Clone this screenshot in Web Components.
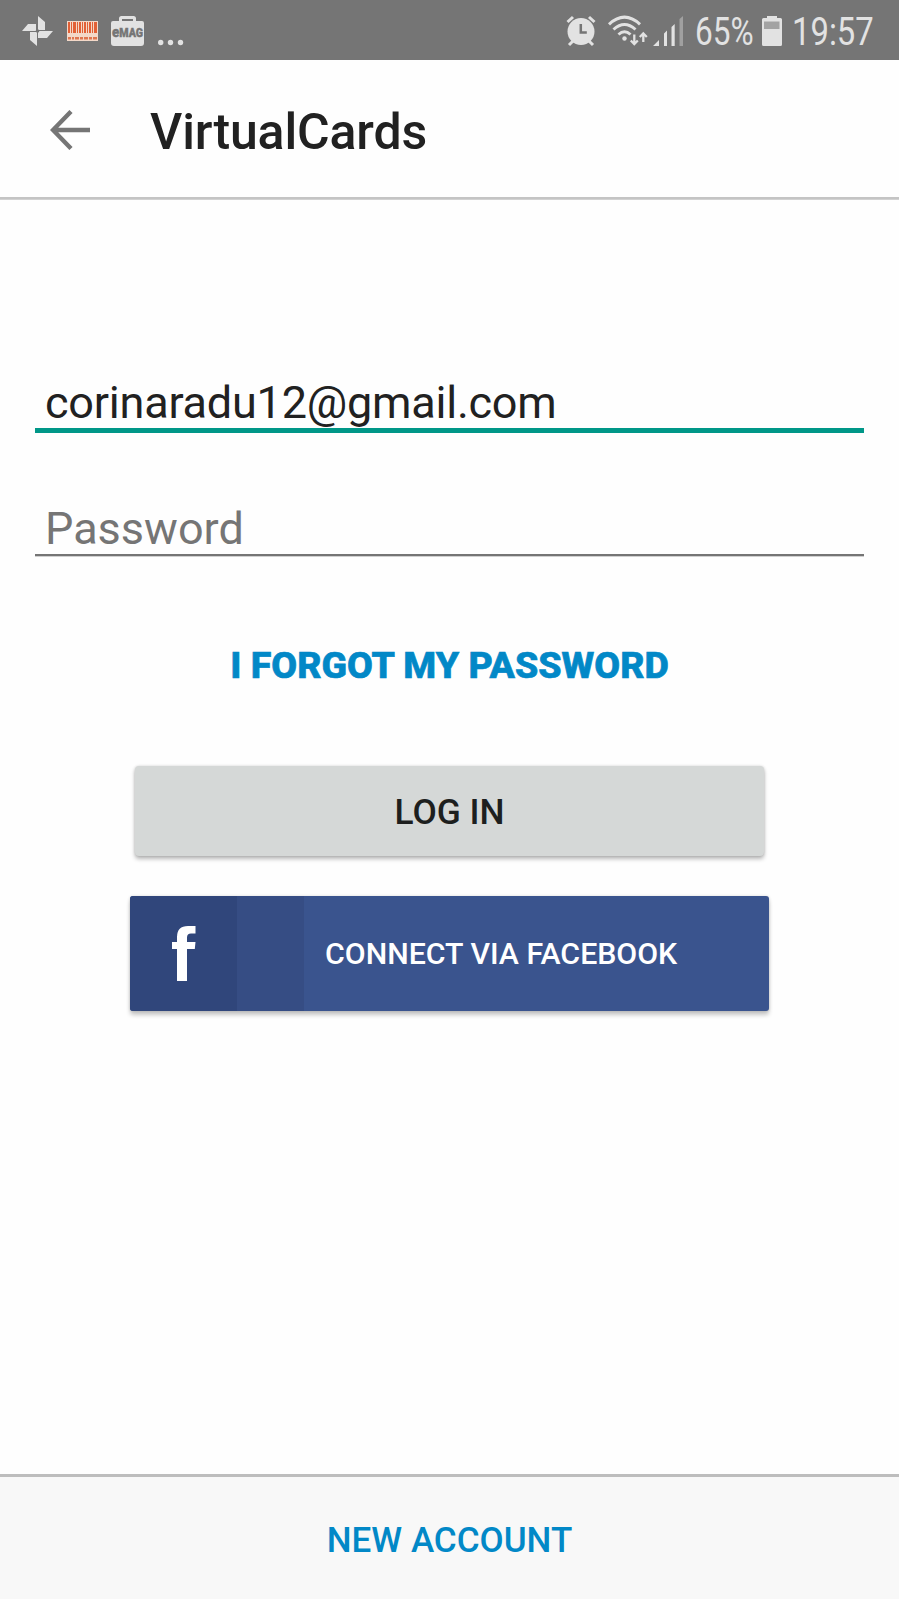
<!DOCTYPE html>
<html lang="en">
<head>
<meta charset="utf-8">
<title>VirtualCards</title>
<style>
html,body{margin:0;height:100%;background:#fefefe}
body{font-family:Roboto,"Liberation Sans",sans-serif;color:#212121}
</style>
</head>
<body>
<login-screen></login-screen>
<script>
const define = (name, html) => {
  const template = document.createElement('template');
  template.innerHTML = html;
  customElements.define(name, class extends HTMLElement {
    constructor() {
      super();
      this.attachShadow({ mode: 'open' }).append(template.content.cloneNode(true));
    }
  });
};

define('status-bar', `
<style>
:host{display:flex;height:60px;background:#757575;color:#e2e2e2;align-items:flex-start;box-sizing:border-box}
svg{display:block;flex:none}
.level,.time{font-size:39px;line-height:60px;height:60px;white-space:nowrap;transform-origin:0 50%;margin-top:2px}
.level{width:61px;transform:scaleX(.81)}
.time{width:82px;transform:scaleX(.842)}
.gap{flex:1}
</style>
<svg width="200" height="60" viewBox="0 0 200 60" fill="#e2e2e2">
  <path d="M38 16L45 22V30H38ZM53 31L47 38H38V31ZM37 46L30 40V32H37ZM22 31L28 24H36V31Z"/>
  <circle cx="37.500" cy="31" r="1.800" fill="#757575"/>
  <rect x="67" y="21" width="31" height="20" fill="#f3d8c8"/>
  <path fill="#e26036" d="M68 22h2v11h-2zM71 22h1v11h-1zM73 22h3v11h-3zM77 22h1v11h-1zM79 22h2v11h-2zM82 22h1v11h-1zM84 22h2v11h-2zM87 22h1v11h-1zM89 22h2v11h-2zM92 22h1v11h-1zM94 22h3v11h-3z"/>
  <path fill="#df7650" d="M68 37h3v2.500h-3zM72 37h2v2.500h-2zM75 37h4v2.500h-4zM80 37h3v2.500h-3zM84 37h4v2.500h-4zM89 37h3v2.500h-3zM93 37h4v2.500h-4z"/>
  <path d="M119 21v-2.500q0-2.500 2.500-2.500h12q2.500 0 2.500 2.500V21h6q2 0 2 2v20q0 3-3 3h-27q-3 0-3-3V23q0-2 2-2zm3 0h11v-2h-11z"/>
  <text x="112" y="37" font-family="Roboto,sans-serif" font-weight="900" font-size="12" textLength="31" lengthAdjust="spacingAndGlyphs" fill="#757575" stroke="#757575" stroke-width=".4"><tspan font-size="15">e</tspan>MAG</text>
  <circle cx="160.700" cy="42.500" r="2.700"/><circle cx="170.500" cy="42.500" r="2.700"/><circle cx="180.500" cy="42.500" r="2.700"/>
</svg>
<span class="gap"></span>
<svg width="130" height="60" viewBox="565 0 130 60" fill="none" stroke="#e2e2e2">
  <circle cx="581" cy="31.500" r="13.500" fill="#e2e2e2" stroke="none"/>
  <path d="M567.500 22l5.500-5M594.500 22l-5.500-5" stroke-width="3"/>
  <path d="M573 41l-4 4M589 41l4 4" stroke-width="3"/>
  <path d="M580.800 24v8.500h6" stroke="#757575" stroke-width="2.500"/>
  <path d="M609 24.300Q624.500 10 640 24.300M613.500 29.500Q624.500 19.500 635.500 29.500M618.500 34.500Q624.500 29 630.500 34.500" stroke-width="3"/>
  <circle cx="624.500" cy="38.500" r="2.200" fill="#e2e2e2" stroke="none"/>
  <path d="M634.300 34.500v9M630.800 40.500l3.500 3.700 3.500-3.700M643.300 42v-8M639.800 37l3.500-3.700 3.500 3.700" stroke-width="2.300"/>
  <path d="M653 46l6-6v6zM664 46V33.500l3-3V46zM671.500 46V27l3.200-3v22z" fill="#e2e2e2" stroke="none"/>
  <path d="M679.500 46V19l3.500-3v30z" fill="#a0a0a0" stroke="none"/>
</svg>
<span class="level">65%</span>
<svg width="36" height="60" viewBox="756 0 36 60">
  <path fill="#e2e2e2" d="M767 18v-2h10v2h3.500q1.500 0 1.500 1.500v25q0 1.500-1.500 1.500h-17q-1.500 0-1.500-1.500v-25q0-1.500 1.500-1.500z"/>
  <rect x="764" y="21.500" width="15.500" height="7.500" fill="#a3a3a3"/>
</svg>
<span class="time">19:57</span>
<span style="width:25px"></span>
`);

define('app-bar', `
<style>
:host{display:flex;align-items:center;height:139px;box-sizing:border-box;padding-left:50px;border-bottom:2px solid #c4c4c4;box-shadow:0 1px 0 #d2d2d2;margin-bottom:1px}
svg{width:40px;height:40px;margin:3px 60px 0 0;display:block}
h1{margin:6px 0 0;font-size:50px;line-height:60px;font-weight:500;letter-spacing:-.15px}
</style>
<svg viewBox="0 0 40 40" fill="none" stroke="#757575" stroke-width="4.400"><path d="M21 1.500L3 20l18 18.500M3 20h37"/></svg>
<h1><slot></slot></h1>
`);

define('text-field', `
<style>
:host{display:block;box-sizing:border-box;padding-left:10px;font-size:45px;white-space:nowrap}
div{line-height:54px;height:52px}
:host([active]){height:66px;border-bottom:5px solid #009788;letter-spacing:-.22px}
:host(:not([active])){height:54px;border-bottom:2px solid #757575;box-shadow:0 1px 0 #d0d0d0;color:#757575}
:host([active]) div{padding-top:9px}
</style>
<div><slot></slot></div>
`);

define('link-button', `
<style>
:host{display:block;text-align:center;color:#0288c7;white-space:nowrap}
</style>
<slot></slot>
`);

define('login-button', `
<style>
:host{display:flex;width:629px;height:90px;align-items:center;justify-content:center;background:#d5d8d7;border-radius:4px;box-shadow:0 3px 4px rgba(0,0,0,.27),0 0 3px rgba(0,0,0,.15);font-size:35.300px;font-weight:500;color:#1d1f1e;box-sizing:border-box;padding-top:2px}
</style>
<slot></slot>
`);

define('facebook-button', `
<style>
:host{display:grid;grid-template-columns:107px 67px 1fr;width:639px;height:115px;background:#3a548e;border-radius:3px;overflow:hidden;box-shadow:0 4px 4px rgba(0,0,0,.22),0 0 3px rgba(0,0,0,.15);color:#fff;font-size:30.300px;font-weight:500}
.mark{background:#30467b;display:flex;padding:30px 0 0 42px}
.shade{background:#364d84}
.label{align-self:center;padding:0 0 0 21px;white-space:nowrap}
svg{width:24px;height:55px}
</style>
<span class="mark"><svg viewBox="0 0 24 55"><path fill="#fff" d="M5 55V23H0v-7h5v-5Q5 0 16 0h7.500v7.500H19Q15 7.500 15 11.500V16h8.500l-.7 7H15v32z"/></svg></span>
<span class="shade"></span>
<span class="label"><slot></slot></span>
`);

define('login-screen', `
<style>
:host{display:flex;flex-direction:column;height:1599px;overflow:hidden;background:#fefefe}
main{flex:1;display:flex;flex-direction:column;align-items:center;padding:167px 35px 0}
text-field{align-self:stretch}
text-field+text-field{margin-top:69px}
.forgot{font-size:37.500px;line-height:46px;font-weight:800;-webkit-text-stroke:.7px #0288c7;letter-spacing:.02px;margin:86px 0 78px}
facebook-button{margin-top:40px}
footer{height:125px;box-sizing:border-box;border-top:3px solid #bdbdbd;background:#f8f8f8;display:flex;justify-content:center;align-items:center;padding-top:4px}
footer link-button{font-size:35px;font-weight:500}
</style>
<status-bar></status-bar>
<app-bar>VirtualCards</app-bar>
<main>
  <text-field active>corinaradu12@gmail.com</text-field>
  <text-field>Password</text-field>
  <link-button class="forgot">I FORGOT MY PASSWORD</link-button>
  <login-button>LOG IN</login-button>
  <facebook-button>CONNECT VIA FACEBOOK</facebook-button>
</main>
<footer><link-button>NEW ACCOUNT</link-button></footer>
`);
</script>
</body>
</html>
